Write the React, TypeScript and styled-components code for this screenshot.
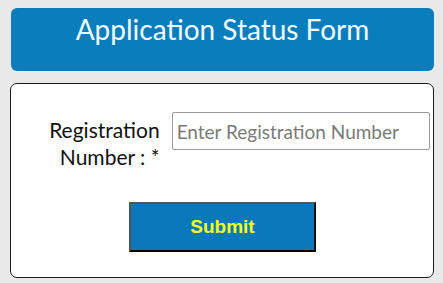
import * as React from "react";
import styled, { createGlobalStyle } from "styled-components";

const App: React.FC = () => {
  return (
    <>
      <GlobalStyle />
      <Page>
        <Header>
          <Title>Application Status Form</Title>
        </Header>
        <Card>
          <FieldRow>
            <Label htmlFor="regno">
              Registration
              <br />
              Number : *
            </Label>
            <Input id="regno" type="text" placeholder="Enter Registration Number" />
          </FieldRow>
          <Actions>
            <SubmitButton type="button">Submit</SubmitButton>
          </Actions>
        </Card>
      </Page>
    </>
  );
};

export default App;

// css
const GlobalStyle = createGlobalStyle`
  html, body {
    margin: 0;
    padding: 0;
    background: #e9e9e9;
  }
  body {
    font-family: Lato, "Open Sans", sans-serif;
  }
`;

const Page = styled.div`
  width: 443px;
  height: 283px;
  box-sizing: border-box;
  padding: 8px 9px 0 10px;
  display: flex;
  flex-direction: column;
  gap: 12px;
`;

const Header = styled.div`
  height: 63px;
  margin-left: 1px;
  background: #0a7dbd;
  border-radius: 6px;
  display: flex;
  justify-content: center;
  align-items: flex-start;
`;

const Title = styled.h1`
  margin: 0;
  padding-top: 5px;
  font-family: Lato, sans-serif;
  font-weight: 400;
  font-size: 28px;
  line-height: 32px;
  color: #f2fbff;
`;

const Card = styled.div`
  height: 195px;
  box-sizing: border-box;
  background: #ffffff;
  border: 1px solid #1a1a1a;
  border-radius: 7px;
  padding: 28px 3px 0 0;
  display: flex;
  flex-direction: column;
`;

const FieldRow = styled.div`
  display: flex;
  align-items: flex-start;
  gap: 12px;
`;

const Label = styled.label`
  width: 149px;
  padding-top: 4px;
  text-align: right;
  font-family: Lato, sans-serif;
  font-size: 21px;
  line-height: 27px;
  color: #111;
`;

const Input = styled.input`
  width: 259px;
  height: 38px;
  box-sizing: border-box;
  border: 1px solid #9a9a9a;
  border-radius: 2px;
  padding: 0 4px;
  font-family: Lato, sans-serif;
  font-size: 19px;
  color: #333;
  outline: none;
  &::placeholder {
    color: #7a7a7a;
  }
`;

const Actions = styled.div`
  display: flex;
  padding-left: 118px;
  margin-top: 32px;
`;

const SubmitButton = styled.button`
  width: 187px;
  height: 50px;
  box-sizing: border-box;
  background: #0a78ba;
  border-style: solid;
  border-width: 2px;
  border-color: #555 #111 #000 #555;
  font-family: "Liberation Sans", Arial, sans-serif;
  font-weight: 700;
  font-size: 19px;
  color: #f5ff1e;
  cursor: pointer;
`;
